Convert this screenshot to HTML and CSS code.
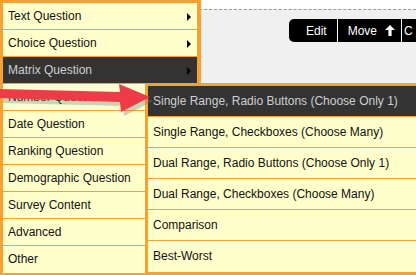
FILE: index.html
```html
<!DOCTYPE html>
<html lang="en">
  <head>
    <meta charset="UTF-8" />
    <title>Add Question</title>
    <link rel="stylesheet" href="styles.css">
  </head>
  <body>
    <!-- Survey canvas behind the menus -->
    <div class="workspace">
      <div class="toolbar">
        <div class="btn-group">
          <span class="btn first">Edit</span>
          <span class="btn move">Move
            <svg class="up" width="10" height="11" viewBox="0 0 10 11">
              <path d="M5 0 L10 5 L6.6 5 L6.6 11 L3.4 11 L3.4 5 L0 5 Z" fill="#fff" />
            </svg>
          </span>
          <span class="btn last">C</span>
        </div>
      </div>
    </div>

    <!-- Question type menu -->
    <ul class="menu">
      <li class="has-sub">Text Question</li>
      <li class="has-sub">Choice Question</li>
      <li class="has-sub active">Matrix Question</li>
      <li>Number Question</li>
      <li>Date Question</li>
      <li>Ranking Question</li>
      <li>Demographic Question</li>
      <li>Survey Content</li>
      <li>Advanced</li>
      <li>Other</li>
    </ul>

    <!-- Matrix sub menu -->
    <ul class="menu submenu">
      <li class="active">Single Range, Radio Buttons (Choose Only 1)</li>
      <li>Single Range, Checkboxes (Choose Many)</li>
      <li>Dual Range, Radio Buttons (Choose Only 1)</li>
      <li>Dual Range, Checkboxes (Choose Many)</li>
      <li>Comparison</li>
      <li>Best-Worst</li>
    </ul>

    <!-- Callout arrow pointing at the sub menu -->
    <svg class="callout" width="160" height="40" viewBox="0 0 160 40">
      <polygon points="2,10 121,12 120,4 152,18 123,33 122,23 2,20" fill="#7a7a7a" opacity="0.35" transform="translate(1,2)" />
      <polygon points="0,8 120,11 119,3 150,16 121,31 120,21 0,17" fill="#ee3b47" />
    </svg>
  </body>
</html>
```

FILE: styles.css
```css
body {
  font-family: "Liberation Sans", Arial, sans-serif;
  font-size: 12px;
  margin: 0;
  width: 416px;
  height: 275px;
  overflow: hidden;
  background: #ffffff;
  position: relative;
}

/* Canvas behind the menus */
.workspace {
  margin-top: 9px;
  border-top: 1px dashed #9a9a9a;
  background: #f0f0f0;
  height: 265px;
}

.toolbar {
  display: flex;
  padding: 9px 0 0 289px;
}

.btn-group {
  display: flex;
  flex-grow: 1;
  background: #000000;
  border-radius: 5px 0 0 5px;
  height: 23px;
}

.btn {
  display: flex;
  align-items: center;
  gap: 8px;
  color: #ffffff;
  padding: 0 10px;
  border-left: 1px solid #ffffff;
  white-space: nowrap;
}

.btn.first {
  border-left: none;
  padding-left: 17px;
}

.btn.move {
  padding-right: 6px;
}

.btn.last {
  padding: 0 2px;
}

/* Menus */
.menu {
  position: absolute;
  top: 0;
  left: 0;
  width: 194px;
  margin: 0;
  padding: 0;
  list-style: none;
  background: #ffffcc;
  border: 3px solid #f9a033;
  border-right-width: 4px;
}

.menu li {
  position: relative;
  height: 27px;
  line-height: 26px;
  padding-left: 5px;
  color: #111111;
  border-bottom: 1px solid #f9a033;
  box-sizing: border-box;
  white-space: nowrap;
}

.menu li:last-child {
  border-bottom: none;
}

.menu li.active {
  background: #333333;
  color: #cfcfcf;
}

.menu li.has-sub::after {
  content: "";
  position: absolute;
  right: 6px;
  top: 10px;
  border-top: 4px solid transparent;
  border-bottom: 4px solid transparent;
  border-left: 4px solid #000000;
}

.submenu {
  top: 83px;
  left: 145px;
  width: 271px;
  border-right-width: 3px;
}

.submenu li {
  height: 31px;
  line-height: 30px;
  padding-left: 5px;
}

.callout {
  position: absolute;
  left: 0;
  top: 81px;
}
```
